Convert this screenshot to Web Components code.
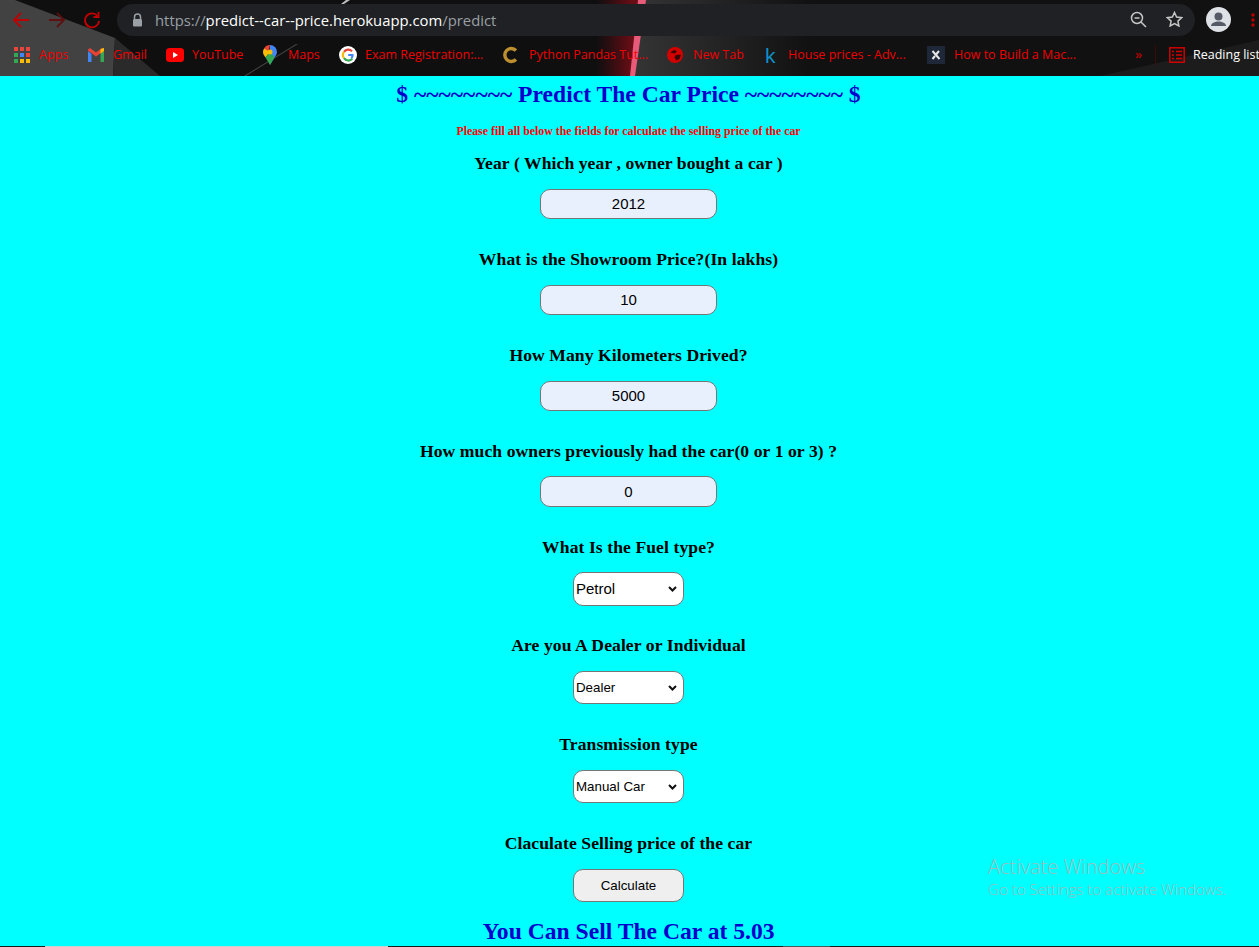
<!DOCTYPE html>
<html lang="en">
<head>
<meta charset="utf-8">
<title>Predict The Car Price</title>
<style>
  html, body { margin: 0; height: 947px; overflow: hidden; background: #00ffff; }
  body { position: relative; font-family: "Liberation Serif", serif; }
</style>
</head>
<body>
<browser-chrome>
  <bookmark-item w="31" gap="9"><svg slot="icon" width="16" height="16" viewBox="0 0 16 16"><g fill="#e8453c"><rect x="0" y="0" width="4" height="4"/><rect x="6" y="0" width="4" height="4"/><rect x="12" y="0" width="4" height="4"/></g><g fill="#34a853"><rect x="0" y="6" width="4" height="4"/><rect x="6" y="6" width="4" height="4" fill="#4285f4"/><rect x="12" y="6" width="4" height="4" fill="#ea4335"/></g><g fill="#fbbc05"><rect x="0" y="12" width="4" height="4" fill="#34a853"/><rect x="6" y="12" width="4" height="4"/><rect x="12" y="12" width="4" height="4"/></g></svg>Apps</bookmark-item>
  <bookmark-item w="35" gap="9" style="margin-left:18px"><svg slot="icon" width="16" height="14" viewBox="0 0 16 14"><path d="M0 3v11h3.500V6z" fill="#4285f4"/><path d="M16 3v11h-3.500V6z" fill="#34a853"/><path d="M0 2.500 8 8.500l8-6V1.500L14 0 8 4.500 2 0 0 1.500z" fill="#ea4335"/><path d="M12.500 1.100 16 0v3l-3.500 3z" fill="#fbbc05"/></svg>Gmail</bookmark-item>
  <bookmark-item w="51" style="margin-left:18px" gap="8"><svg slot="icon" width="18" height="14" viewBox="0 0 18 14"><rect width="18" height="14" rx="3.500" fill="#f00"/><path d="M7 4l5 3-5 3z" fill="#fff"/></svg>YouTube</bookmark-item>
  <bookmark-item w="32" style="margin-left:20px" gap="11"><svg slot="icon" width="14" height="20" viewBox="0 0 14 20"><path d="M7 0a7 7 0 0 1 7 7c0 2-1 3.500-2.500 5.500L7 20z" fill="#4285f4"/><path d="M7 0a7 7 0 0 0-6 3.400L5 9z" fill="#ea4335"/><path d="M1 3.400A7 7 0 0 0 0 7c0 2 1 3.500 2.500 5.500L7 7z" fill="#fbbc05"/><path d="M2.500 12.500 7 20l4.500-7.500L9 9H5z" fill="#34a853"/><circle cx="7" cy="7" r="2.500" fill="#fbbc05"/></svg>Maps</bookmark-item>
  <bookmark-item w="118" style="margin-left:19px" gap="8"><svg slot="icon" width="18" height="18" viewBox="0 0 18 18"><circle cx="9" cy="9" r="9" fill="#fff"/><path d="M13 5.200A5.300 5.300 0 0 0 5 5.800" fill="none" stroke="#ea4335" stroke-width="2.200"/><path d="M5 5.800a5.300 5.300 0 0 0 0 6.400" fill="none" stroke="#fbbc05" stroke-width="2.200"/><path d="M5 12.200a5.300 5.300 0 0 0 8.300.6" fill="none" stroke="#34a853" stroke-width="2.200"/><path d="M9.200 8h5.300c.3 2-.2 3.700-1.200 4.800l-1.700-1.400c.5-.5.700-1 .8-1.500H9.200z" fill="#4285f4"/></svg>Exam Registration:...</bookmark-item>
  <bookmark-item w="119" style="margin-left:20px" gap="11"><svg slot="icon" width="15" height="18" viewBox="0 0 15 18"><path d="M13 4.500A6.500 6.500 0 1 0 13 13.500" fill="none" stroke="#bd902f" stroke-width="3.400"/></svg>Python Pandas Tut...</bookmark-item>
  <bookmark-item w="51" style="margin-left:19px" gap="10"><svg slot="icon" width="16" height="16" viewBox="0 0 16 16"><circle cx="8" cy="8" r="8" fill="#d40000"/><path d="M3 5.500 7 3l3 1-2 2.500zM9 8l5-.5L12.500 12 9 13.500 7.500 10z" fill="#3a0505"/></svg>New Tab</bookmark-item>
  <bookmark-item w="120" style="margin-left:21px" gap="11"><svg slot="icon" width="12" height="24" viewBox="0 0 12 24"><text x="0" y="20" font-family="Liberation Sans, sans-serif" font-size="21" fill="#0e8fc7">k</text></svg>House prices - Adv...</bookmark-item>
  <bookmark-item w="124" style="margin-left:19px" gap="9"><svg slot="icon" width="18" height="18" viewBox="0 0 18 18"><rect width="18" height="18" fill="#1e2838"/><path d="M5.500 5l7 8M12 5l-3 3.500M5.500 13 8 10" stroke="#e8e8e8" stroke-width="2" fill="none"/></svg>How to Build a Mac...</bookmark-item>
</browser-chrome>
<car-form></car-form>
<system-watermark></system-watermark>
<task-strip></task-strip>

<script>
class BrowserChrome extends HTMLElement {
  constructor() {
    super();
    this.attachShadow({ mode: 'open' });
    this.shadowRoot.innerHTML = `
      <style>
        :host { display: block; position: relative; height: 76px; background: #0f0f10; overflow: hidden; font-family: "Open Sans", sans-serif; }
        .wall { position: absolute; left: 0; top: 0; }
        .top { position: relative; height: 40px; display: flex; align-items: flex-start; }
        .nav { width: 117px; height: 40px; flex: none; display: flex; align-items: center; gap: 18px; padding-left: 12px; box-sizing: border-box; }
        .omni { width: 1078px; height: 32px; margin-top: 4px; flex: none; background: #202124; border-radius: 16px; display: flex; align-items: center; box-sizing: border-box; padding-left: 15px; }
        .url { margin-left: 12px; font-size: 14.840px; color: #9aa0a6; white-space: nowrap; flex: 1; }
        .url b { font-weight: 400; color: #fff; }
        .omni svg.zoom { margin-right: 19px; margin-top: -2px; }
        .omni svg.star { margin-right: 12px; margin-top: -2px; }
        .avatar { margin: 7px 0 0 11px; flex: none; }
        .dots { margin: 13px 0 0 20px; flex: none; }
        .marks { position: relative; height: 30px; display: flex; align-items: center; padding-left: 14px; white-space: nowrap; }
        .more { position: absolute; left: 1135px; top: 6px; font-size: 13px; line-height: 16px; color: #b40000; font-weight: 600; }
        .sep { position: absolute; left: 1155px; top: 5px; width: 1px; height: 20px; background: #3c0c0c; }
        .list { position: absolute; left: 1169px; top: 5px; display: flex; align-items: center; gap: 8px; color: #fff; font-size: 12.500px; line-height: 20px; }
      </style>
      <svg class="wall" width="1259" height="76" viewBox="0 0 1259 76">
        <defs>
          <linearGradient id="glow" gradientUnits="userSpaceOnUse" x1="596" x2="632" y1="0" y2="0"><stop offset="0" stop-color="#5a0a10" stop-opacity="0"/><stop offset="1" stop-color="#6a0e16"/></linearGradient>
          <linearGradient id="grey" gradientUnits="userSpaceOnUse" x1="636" x2="810" y1="0" y2="0"><stop offset="0" stop-color="#343434"/><stop offset="1" stop-color="#111"/></linearGradient>
        </defs>
        <polygon points="0,0 15,0 115,38 113,76 0,76" fill="#424242"/>
        <polygon points="115,38 160,76 113,76" fill="#2a2a2a"/>
        <polygon points="640,0 1259,0 1259,76 632,76" fill="url(#grey)"/>
        <polygon points="590,0 640,0 632,76 596,76" fill="url(#glow)"/>
        <polygon points="638,0 646,0 635,76 630,76" fill="#e85a7a"/>
        <polygon points="298,44 246,76 244,76 296,44" fill="#444"/>
        <polygon points="350,0 344,4 341,4 346,0" fill="#bbb"/>
        <polygon points="1100,76 1259,40 1259,76" fill="#1c1c1c"/>
      </svg>
      <div class="top">
        <div class="nav">
          <svg width="18" height="16" viewBox="0 0 18 16" fill="none" stroke="#c00000" stroke-width="1.800"><path d="M17 8H2M9 1 2 8l7 7"/></svg>
          <svg width="18" height="16" viewBox="0 0 18 16" fill="none" stroke="#5e1010" stroke-width="1.800"><path d="M1 8h15M9 1l7 7-7 7"/></svg>
          <svg width="18" height="18" viewBox="0 0 18 18" fill="none" stroke="#c00000" stroke-width="1.900" style="margin-left:-1px"><path d="M14.500 5A7 7 0 1 0 16 10"/><path d="M15.500 1v5h-5"/></svg>
        </div>
        <div class="omni">
          <svg width="11" height="14" viewBox="0 0 11 14"><path d="M2.500 6V4a3 3 0 0 1 6 0v2" fill="none" stroke="#9aa0a6" stroke-width="1.500"/><rect x="1" y="6" width="9" height="7.500" rx="1.200" fill="#9aa0a6"/></svg>
          <span class="url">https://<b>predict--car--price.herokuapp.com</b>/predict</span>
          <svg class="zoom" width="17" height="17" viewBox="0 0 17 17" fill="none" stroke="#c4c7c5" stroke-width="1.500"><circle cx="7" cy="7" r="5.500"/><path d="M4.500 7h5M11 11l5 5"/></svg>
          <svg class="star" width="17" height="16" viewBox="0 0 17 16" fill="none" stroke="#c4c7c5" stroke-width="1.500"><path d="M8.500 1.500l2.100 4.600 5 .6-3.700 3.400 1 4.900-4.400-2.500-4.400 2.500 1-4.900L1.400 6.700l5-.6z"/></svg>
        </div>
        <svg class="avatar" width="25" height="25" viewBox="0 0 25 25"><circle cx="12.500" cy="12.500" r="12.500" fill="#dee1e6"/><circle cx="12.500" cy="9.500" r="4" fill="#555b66"/><path d="M5 19c0-3 4-4.500 7.500-4.500S20 16 20 19z" fill="#555b66"/></svg>
        <svg class="dots" width="4" height="14" viewBox="0 0 4 14"><g fill="#c00000"><circle cx="2" cy="2" r="1.700"/><circle cx="2" cy="7" r="1.700"/><circle cx="2" cy="12" r="1.700"/></g></svg>
      </div>
      <div class="marks">
        <slot></slot>
        <span class="more">»</span>
        <span class="sep"></span>
        <span class="list">
          <svg width="16" height="16" viewBox="0 0 16 16" fill="none" stroke="#d40000" stroke-width="1.500"><rect x=".8" y=".8" width="14.400" height="14.400"/><path d="M3 4.500h2M7 4.500h6M3 8h2M7 8h6M3 11.500h2M7 11.500h6"/></svg>
          Reading list
        </span>
      </div>`;
  }
}

class BookmarkItem extends HTMLElement {
  constructor() {
    super();
    this.attachShadow({ mode: 'open' });
  }

  connectedCallback() {
    const w = this.getAttribute('w') || 40;
    const gap = this.getAttribute('gap') || 10;
    this.shadowRoot.innerHTML = `
      <style>
        :host { display: inline-flex; align-items: center; gap: ${gap}px; color: #ee0000; font-size: 12.500px; line-height: 20px; }
        .name { display: block; width: ${w}px; white-space: nowrap; }
        ::slotted(svg) { display: block; flex: none; }
      </style>
      <slot name="icon"></slot>
      <span class="name"><slot></slot></span>`;
  }
}

class FormField extends HTMLElement {
  constructor() {
    super();
    this.attachShadow({ mode: 'open' });
    this.shadowRoot.innerHTML = `
      <style>
        :host { display: flex; flex-direction: column; align-items: center; }
        label { display: block; font-weight: 700; font-size: 17.600px; letter-spacing: .08px; line-height: 20px; color: #000; margin-bottom: var(--label-gap, 16px); white-space: nowrap; }
      </style>
      <label><slot name="label"></slot></label>
      <slot></slot>`;
  }
}

class NumberBox extends HTMLElement {
  constructor() {
    super();
    this.attachShadow({ mode: 'open' });
  }

  connectedCallback() {
    const h = this.getAttribute('h') || 30;
    const lift = h == 30 ? 2 : 0;
    this.shadowRoot.innerHTML = `
      <style>
        :host { display: block; }
        input { display: block; box-sizing: border-box; width: 177px; height: ${h}px; border: 1px solid #767676; border-radius: 10px; background: #e8f0fe; color: #000; text-align: center; font: 15px "Liberation Sans", sans-serif; padding: 0 0 ${lift}px; outline: none; }
      </style>
      <input type="text" value="${this.getAttribute('value')}">`;
  }
}

class ChoiceBox extends HTMLElement {
  constructor() {
    super();
    this.attachShadow({ mode: 'open' });
  }

  connectedCallback() {
    const size = this.getAttribute('size') || 13.333;
    const h = this.getAttribute('h') || 33;
    const lift = h == 34 ? 2 : 0;
    this.shadowRoot.innerHTML = `
      <style>
        :host { display: block; position: relative; }
        select { display: block; box-sizing: border-box; width: 111px; height: ${h}px; padding: 0 0 ${lift}px 2px; border: 1px solid #767676; border-radius: 10px; background: #fff; color: #000; font: ${size}px "Liberation Sans", sans-serif; outline: none; appearance: none; -webkit-appearance: none; }
        svg { position: absolute; right: 7px; top: 50%; margin-top: -3px; pointer-events: none; }
      </style>
      <select><option>${this.getAttribute('value')}</option></select>
      <svg width="9" height="6" viewBox="0 0 9 6" fill="none" stroke="#111" stroke-width="2"><path d="M1 1l3.500 3.500L8 1"/></svg>`;
  }
}

class ActionButton extends HTMLElement {
  constructor() {
    super();
    this.attachShadow({ mode: 'open' });
    this.shadowRoot.innerHTML = `
      <style>
        :host { display: block; }
        button { display: block; box-sizing: border-box; width: 111px; height: 33px; border: 1px solid #767676; border-radius: 10px; background: #efefef; color: #000; font: 13.333px "Liberation Sans", sans-serif; padding: 0; }
      </style>
      <button type="button"><slot></slot></button>`;
  }
}

class CarForm extends HTMLElement {
  constructor() {
    super();
    this.attachShadow({ mode: 'open' });
    this.shadowRoot.innerHTML = `
      <style>
        :host { display: flex; flex-direction: column; align-items: center; color: #000; padding: 5px 2px 0 0; font-family: "Liberation Serif", serif; }
        h2 { margin: 0; font-size: 23.600px; line-height: 27px; font-weight: 700; color: #0000cd; white-space: nowrap; }
        h5 { margin: 16px 0 15px; font-size: 11.850px; line-height: 14px; font-weight: 700; color: #f00; }
        form-field { margin-bottom: 30px; }
        form-field.tight { --label-gap: 15px; }
        form-field.fuel { margin-bottom: 29px; }
        .result { margin-top: -14px; }
      </style>
      <h2>$ ~~~~~~~~ Predict The Car Price ~~~~~~~~ $</h2>
      <h5>Please fill all below the fields for calculate the selling price of the car</h5>
      <form-field><span slot="label">Year ( Which year , owner bought a car )</span><number-box value="2012"></number-box></form-field>
      <form-field><span slot="label">What is the Showroom Price?(In lakhs)</span><number-box value="10"></number-box></form-field>
      <form-field><span slot="label">How Many Kilometers Drived?</span><number-box value="5000"></number-box></form-field>
      <form-field class="tight"><span slot="label">How much owners previously had the car(0 or 1 or 3) ?</span><number-box value="0" h="31"></number-box></form-field>
      <form-field class="tight fuel"><span slot="label">What Is the Fuel type?</span><choice-box value="Petrol" size="15" h="34"></choice-box></form-field>
      <form-field><span slot="label">Are you A Dealer or Individual</span><choice-box value="Dealer"></choice-box></form-field>
      <form-field><span slot="label">Transmission type</span><choice-box value="Manual Car"></choice-box></form-field>
      <form-field><span slot="label">Claculate Selling price of the car</span><action-button>Calculate</action-button></form-field>
      <h2 class="result">You Can Sell The Car at 5.03</h2>`;
  }
}

class SystemWatermark extends HTMLElement {
  constructor() {
    super();
    this.attachShadow({ mode: 'open' });
    this.shadowRoot.innerHTML = `
      <style>
        :host { display: block; position: absolute; left: 988px; top: 856px; color: #9dbcbc; font-family: "Open Sans", sans-serif; font-weight: 300; white-space: nowrap; }
        div { line-height: 22px; }
        .big { font-size: 20px; }
        .small { font-size: 15.100px; }
      </style>
      <div class="big">Activate Windows</div>
      <div class="small">Go to Settings to activate Windows.</div>`;
  }
}

class TaskStrip extends HTMLElement {
  constructor() {
    super();
    this.attachShadow({ mode: 'open' });
    this.shadowRoot.innerHTML = `
      <style>
        :host { display: flex; position: absolute; left: 0; right: 0; bottom: 0; height: 1px; background: #1c1c1c; }
        i { display: block; height: 1px; }
        .a { width: 45px; }
        .b { width: 343px; background: #cfcfcf; }
        .c { width: 395px; }
        .d { width: 47px; background: #4a5a5a; }
      </style>
      <i class="a"></i><i class="b"></i><i class="c"></i><i class="d"></i>`;
  }
}

customElements.define('browser-chrome', BrowserChrome);
customElements.define('bookmark-item', BookmarkItem);
customElements.define('form-field', FormField);
customElements.define('number-box', NumberBox);
customElements.define('choice-box', ChoiceBox);
customElements.define('action-button', ActionButton);
customElements.define('car-form', CarForm);
customElements.define('system-watermark', SystemWatermark);
customElements.define('task-strip', TaskStrip);
</script>
</body>
</html>
